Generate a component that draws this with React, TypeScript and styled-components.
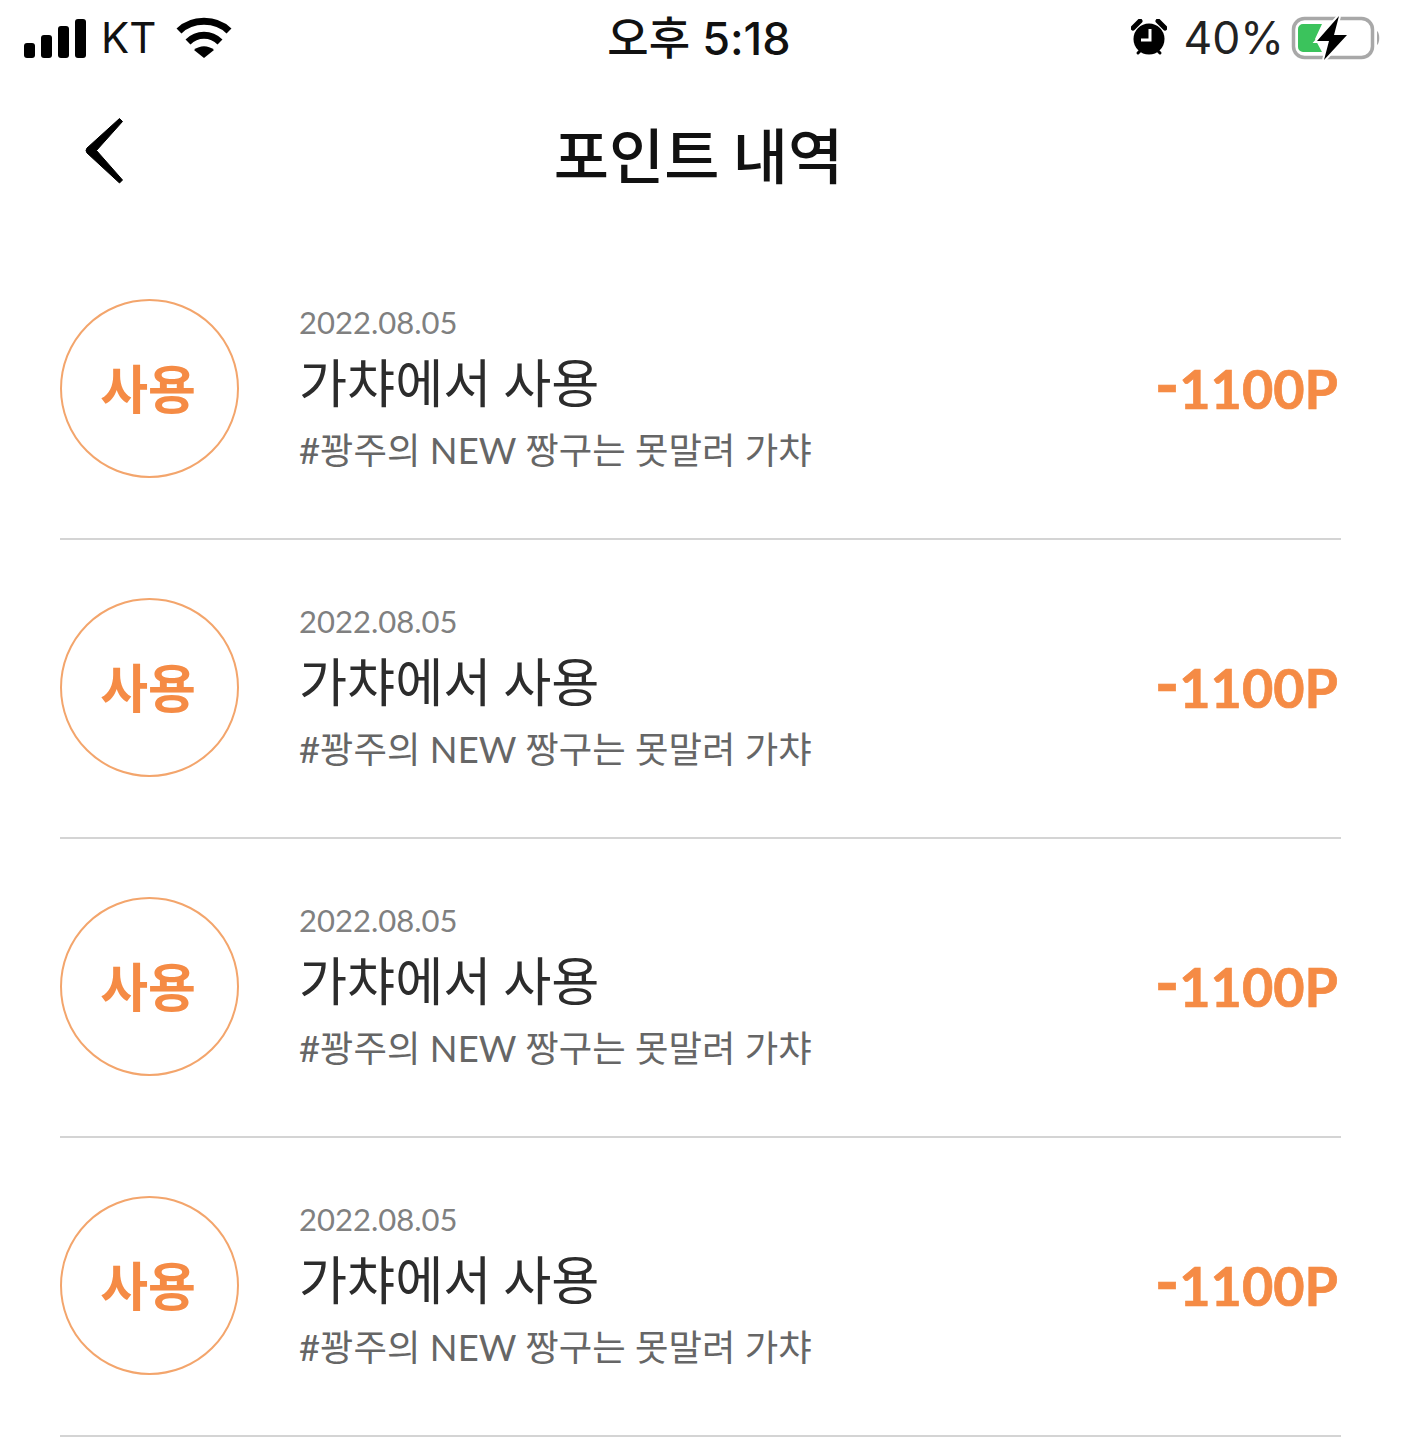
import React from "react";
import styled, { createGlobalStyle } from "styled-components";

const Global = createGlobalStyle`
  html, body { margin: 0; padding: 0; background: #fff; }
  body { font-family: Lato, "Noto Sans CJK KR", sans-serif; width: 1401px; height: 1440px; overflow: hidden; }
`;

const items = [1, 2, 3, 4];

const App = () => {
  return (
    <Page>
      <Global />
      <StatusBar>
        <StatusLeft>
          <svg width="62" height="40" viewBox="0 0 62 40">
            <rect x="0" y="25" width="11" height="15" rx="3" fill="#000" />
            <rect x="17" y="17" width="11" height="23" rx="3" fill="#000" />
            <rect x="34" y="8" width="11" height="32" rx="3" fill="#000" />
            <rect x="51" y="1" width="11" height="39" rx="3" fill="#000" />
          </svg>
          <Carrier>KT</Carrier>
          <svg width="56" height="42" viewBox="0 0 56 42">
            <path d="M3 14 C 16 1, 40 1, 53 14" fill="none" stroke="#000" stroke-width="7" />
            <path d="M12 25 C 21 16, 35 16, 44 25" fill="none" stroke="#000" stroke-width="7" />
            <path d="M18 33 C 24 28, 32 28, 38 33 L 28 41 Z" fill="#000" />
          </svg>
        </StatusLeft>
        <Clock>오후 5:18</Clock>
        <StatusRight>
          <svg width="36" height="38" viewBox="0 0 36 38">
            <circle cx="18" cy="20" r="15.5" fill="#000" />
            <path d="M2 9 L9 2 M34 9 L27 2" stroke="#000" stroke-width="5" stroke-linecap="round" />
            <path d="M7 34 L10 31 M29 34 L26 31" stroke="#000" stroke-width="3" stroke-linecap="round" />
            <path d="M19 10 V21 H10" fill="none" stroke="#fff" stroke-width="3" />
          </svg>
          <Percent>40%</Percent>
          <svg width="90" height="46" viewBox="0 0 90 46">
            <rect x="2.5" y="3.5" width="79" height="39" rx="11" fill="none" stroke="#a8a8a8" stroke-width="3.5" />
            <path d="M7 14 a5 5 0 0 1 5 -5 H31 L24 24 L31 37 H12 a5 5 0 0 1 -5 -5 Z" fill="#3bc35c" />
            <path d="M86 16 c3 2 3 12 0 14 Z" fill="#a8a8a8" />
            <path d="M48 1 L26 26 H38 L33 45 L56 20 H43 Z" fill="#000" stroke="#fff" stroke-width="4" paintOrder="stroke" />
          </svg>
        </StatusRight>
      </StatusBar>
      <Header>
        <BackButton>
          <svg width="42" height="70" viewBox="0 0 42 70">
            <path d="M35.5 1.5 L38.5 4.5 L12.5 33.5 L38.5 63 L35.5 66 L3 36 Q1 33.5 3 31 Z" fill="#000" stroke="#000" stroke-width="1" stroke-linejoin="round" />
          </svg>
        </BackButton>
        <Title>포인트 내역</Title>
      </Header>
      <List>
        {items.map((i) => {
          return (
            <Row key={i}>
              <Badge>사용</Badge>
              <Info>
                <DateText>2022.08.05</DateText>
                <Name>가챠에서 사용</Name>
                <Sub>#꽝주의 NEW 짱구는 못말려 가챠</Sub>
              </Info>
              <Amount>
                <Minus>-</Minus>1100P
              </Amount>
            </Row>
          );
        })}
      </List>
    </Page>
  );
};

const Page = styled.div`
  width: 1401px;
  height: 1440px;
  overflow: hidden;
  background: #fff;
`;

const StatusBar = styled.div`
  height: 76px;
  display: grid;
  grid-template-columns: 1fr auto 1fr;
  align-items: center;
  padding: 0 20px 0 24px;
`;

const StatusLeft = styled.div`
  display: flex;
  align-items: center;
  gap: 15px;
  svg:last-child { margin-left: 5px; }
`;

const StatusRight = styled.div`
  display: flex;
  align-items: center;
  justify-content: flex-end;
`;

const Carrier = styled.span`
  font-family: Inter, sans-serif;
  font-size: 42px;
  color: #111;
  line-height: 1;
`;

const Clock = styled.span`
  font-family: Inter, "Noto Sans CJK KR", sans-serif;
  font-size: 45px;
  font-weight: 500;
  color: #111;
  line-height: 1;
  margin-right: 7px;
`;

const Percent = styled.span`
  font-family: Inter, sans-serif;
  font-size: 44.5px;
  color: #222;
  line-height: 1;
  margin: 0 7px 0 16px;
`;

const Header = styled.div`
  height: 165px;
  position: relative;
  display: flex;
  justify-content: center;
  padding: 41px 4px 0 0;
  box-sizing: border-box;
`;

const BackButton = styled.div`
  position: absolute;
  left: 84px;
  top: 41px;
  line-height: 0;
`;

const Title = styled.h1`
  margin: 0;
  font-family: "Noto Sans CJK KR", sans-serif;
  font-size: 60px;
  font-weight: 500;
  color: #111;
  line-height: 72px;
`;

const List = styled.div`
  margin: 0 60px;
`;

const Row = styled.div`
  display: flex;
  align-items: center;
  height: 299px;
  box-sizing: border-box;
  padding-bottom: 2px;
  border-bottom: 2px solid #d4d4d4;
`;

const Badge = styled.div`
  width: 179px;
  height: 179px;
  box-sizing: border-box;
  flex: none;
  display: flex;
  align-items: center;
  justify-content: center;
  padding: 0 3px 4px 0;
  border: 2px solid #f3a56c;
  border-radius: 50%;
  color: #f58b45;
  font-family: "Noto Sans CJK KR", sans-serif;
  font-size: 52px;
  font-weight: 700;
`;

const Info = styled.div`
  margin-left: 60px;
  flex: 1;
  display: flex;
  flex-direction: column;
`;

const DateText = styled.div`
  font-size: 31px;
  font-weight: 400;
  color: #808080;
  line-height: 38px;
`;

const Name = styled.div`
  font-family: "Noto Sans CJK KR", sans-serif;
  font-size: 52.3px;
  font-weight: 400;
  color: #2c2c2c;
  line-height: 64px;
  margin-top: 7px;
`;

const Sub = styled.div`
  font-size: 36.4px;
  font-weight: 400;
  color: #666;
  line-height: 48px;
  margin-top: 14px;
`;

const Amount = styled.div`
  font-size: 54px;
  font-weight: 700;
  color: #f58b45;
  line-height: 1;
  padding-right: 3px;
  -webkit-text-stroke: 0.7px #f58b45;
`;

const Minus = styled.span`
  font-size: 66px;
  line-height: 0;
`;

export default App;
